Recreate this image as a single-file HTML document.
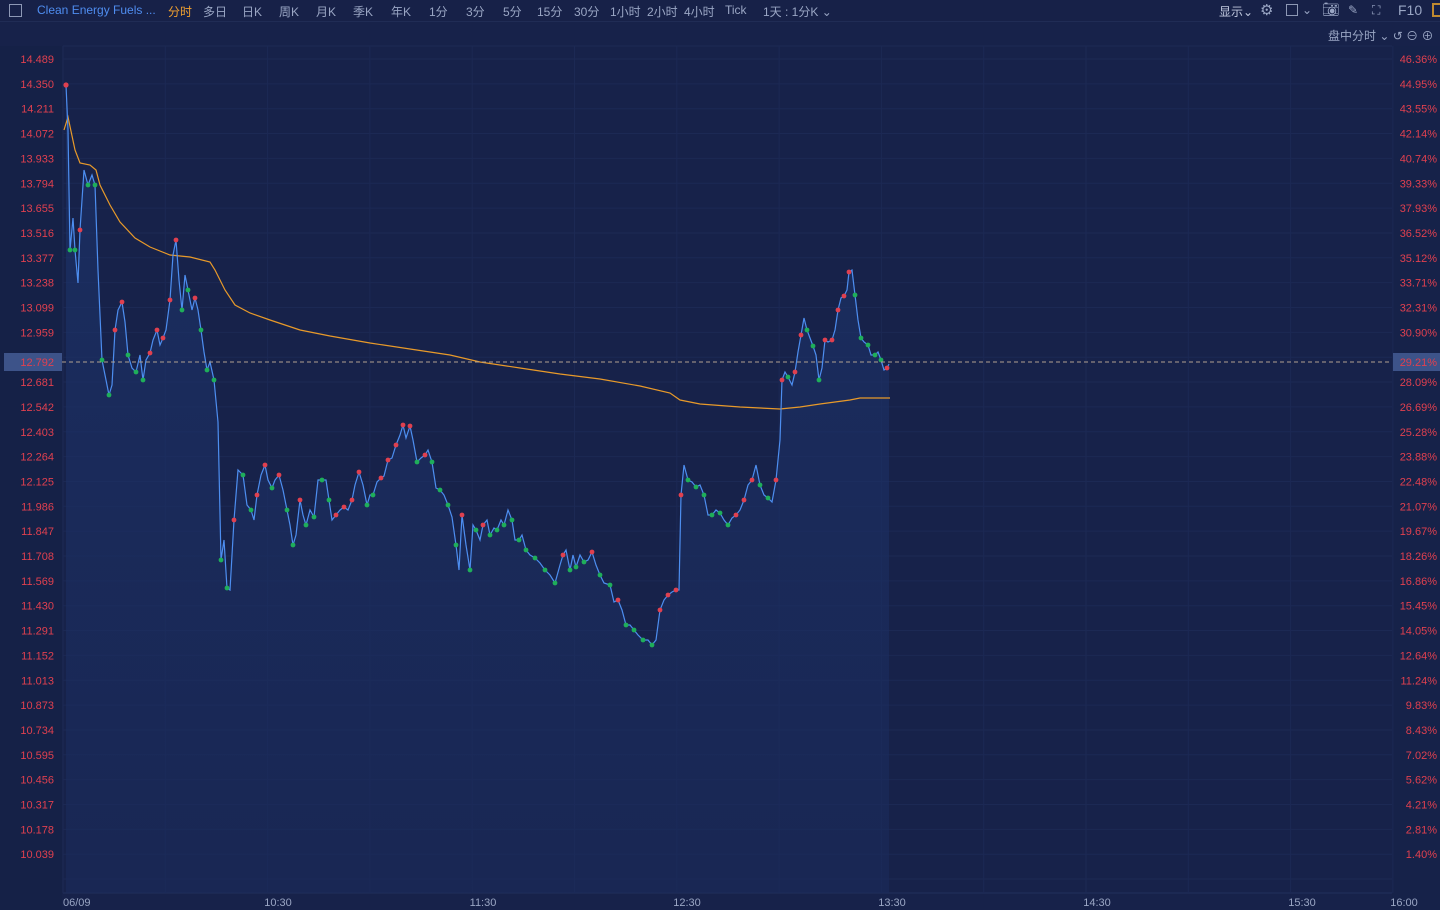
<!DOCTYPE html><html><head><meta charset="utf-8"><style>
*{margin:0;padding:0;box-sizing:border-box}
body{width:1440px;height:910px;background:#17224a;overflow:hidden;font-family:"Liberation Sans","Noto Sans CJK SC",sans-serif;position:relative}
#top{position:absolute;left:0;top:0;width:1440px;height:22px;background:#172148;border-bottom:1px solid #202c55;color:#9aa6c4;font-size:12px}
#top span{position:absolute;top:3px;white-space:nowrap}
svg{position:absolute;left:0;top:0}
</style></head><body>
<div id="top">
<span style="left:9px;top:4px;width:13px;height:13px;border:1px solid #8d98b5"></span>
<span style="left:37px;color:#4f8df0">Clean Energy Fuels ...</span>
<span style="left:168px;color:#f0a030">分时</span>
<span style="left:203px">多日</span><span style="left:242px">日K</span><span style="left:279px">周K</span><span style="left:316px">月K</span><span style="left:353px">季K</span><span style="left:391px">年K</span><span style="left:429px">1分</span><span style="left:466px">3分</span><span style="left:503px">5分</span><span style="left:537px">15分</span><span style="left:574px">30分</span><span style="left:610px">1小时</span><span style="left:647px">2小时</span><span style="left:684px">4小时</span><span style="left:725px">Tick</span><span style="left:763px">1天 : 1分K ⌄</span>
<span style="left:1219px;color:#c0c8de">显示⌄</span>
<span style="left:1260px;font-size:15px;top:1px">⚙</span>
<span style="left:1286px;top:4px;width:12px;height:12px;border:1px solid #8d98b5"></span><span style="left:1302px">⌄</span>
<span style="left:1322px;font-size:14px;top:1px">📷︎</span>
<span style="left:1348px">✎</span><span style="left:1372px">⛶</span>
<span style="left:1398px;font-size:14px;top:2px">F10</span>
<span style="left:1432px;top:3px;width:10px;height:14px;border:2px solid #c08a30"></span>
</div>
<div style="position:absolute;left:1328px;top:27px;color:#9aa6c4;font-size:12px">盘中分时 ⌄ ↺ ⊖ ⊕</div>
<svg id="s" width="1440" height="910"></svg>
<script>
const s=document.getElementById('s');
let h='<rect x="0" y="46" width="62" height="864" fill="#152147"/><rect x="1392" y="46" width="48" height="864" fill="#162249"/>';
h+='<defs><linearGradient id="g" x1="0" y1="0" x2="0" y2="1"><stop offset="0" stop-color="#1d356e"/><stop offset="1" stop-color="#1a2a5a"/></linearGradient></defs>';
for(let i=0;i<34;i++){let y=46+i*24.85+13;h+=`<line x1="63" x2="1392" y1="${y}" y2="${y}" stroke="#1c2954"/>`}
h+=`<line x1="63" x2="1392" y1="46" y2="46" stroke="#1c2954"/><line x1="63" x2="1392" y1="893" y2="893" stroke="#22305c"/>`;
for(let i=0;i<14;i++){let x=63+i*102.3;h+=`<line x1="${x}" x2="${x}" y1="46" y2="893" stroke="#1c2954"/>`}
const L=["14.489","14.350","14.211","14.072","13.933","13.794","13.655","13.516","13.377","13.238","13.099","12.959","","12.681","12.542","12.403","12.264","12.125","11.986","11.847","11.708","11.569","11.430","11.291","11.152","11.013","10.873","10.734","10.595","10.456","10.317","10.178","10.039"];
const R=["46.36","44.95","43.55","42.14","40.74","39.33","37.93","36.52","35.12","33.71","32.31","30.90","","28.09","26.69","25.28","23.88","22.48","21.07","19.67","18.26","16.86","15.45","14.05","12.64","11.24","9.83","8.43","7.02","5.62","4.21","2.81","1.40"];
L.forEach((t,i)=>{if(!t)return;let y=59+i*24.85+4;h+=`<text x="54" y="${y}" fill="#e0404f" font-size="11" text-anchor="end" font-family="Liberation Sans">${t}</text>`;h+=`<text x="1437" y="${y}" fill="#e0404f" font-size="11" text-anchor="end" font-family="Liberation Sans">${R[i]}%</text>`});
const P=[66,85,68,130,70,250,73,218,75,250,78,283,80,230,84,170,88,185,92,175,95,185,98,270,102,360,105,375,109,395,112,385,115,330,118,310,122,302,125,322,128,355,132,368,136,372,140,355,143,380,146,360,150,353,153,340,157,330,160,345,163,338,166,330,170,300,173,255,176,240,179,280,182,310,185,275,188,290,192,310,195,298,198,310,201,330,204,352,207,370,210,362,214,380,218,422,221,560,224,540,227,588,230,590,234,520,238,470,243,475,247,505,251,510,254,520,257,495,261,475,265,465,268,480,272,488,275,480,279,475,283,490,287,510,290,525,293,545,296,535,300,500,303,515,306,525,310,510,314,517,318,480,322,480,326,480,329,500,332,520,336,515,340,510,344,507,348,510,352,500,355,485,359,472,363,485,367,505,370,495,373,495,377,482,381,478,384,476,388,460,392,458,396,445,400,435,403,425,406,438,410,426,413,440,417,462,421,458,425,455,428,450,432,462,436,488,440,490,444,495,448,505,452,517,456,545,459,570,462,515,466,545,470,570,473,525,476,530,480,540,483,525,487,520,490,535,494,528,497,530,501,520,504,525,508,510,512,520,515,540,519,540,522,535,526,550,530,555,535,558,540,563,545,570,550,575,555,583,560,565,563,555,566,550,570,570,573,555,576,567,580,555,584,562,588,560,592,552,596,565,600,575,604,583,610,585,614,602,618,600,622,610,626,625,630,625,634,630,638,635,643,640,648,640,652,645,656,640,660,610,664,600,668,595,672,592,676,590,679,590,681,495,684,465,688,480,692,482,696,487,700,485,704,495,708,515,712,515,716,510,720,513,724,520,728,525,732,518,736,515,740,510,744,500,748,485,752,480,756,465,760,485,764,495,768,498,772,502,776,480,780,440,782,380,785,372,788,377,792,385,795,372,798,352,801,335,804,318,807,330,810,338,813,346,816,355,819,380,822,368,825,340,828,342,832,340,835,330,838,310,841,298,844,296,847,290,849,272,852,270,855,295,858,320,861,338,864,342,868,345,871,355,875,355,878,352,881,360,884,370,887,368,889,364];
let pts=[];for(let i=0;i<P.length;i+=2)pts.push([P[i],P[i+1]]);
let pl=pts.map(p=>p.join(',')).join(' ');
h+=`<polygon points="66,893 ${pl} 889,893" fill="url(#g)" opacity="0.6"/>`;
const V=[64,130,68,117,75,150,80,163,90,165,96,170,100,185,110,205,120,222,135,238,150,247,170,255,190,257,210,262,215,270,225,290,235,305,250,313,270,320,300,330,330,336,370,343,410,349,450,355,480,362,520,368,560,374,600,379,640,386,670,393,680,400,700,404,740,407,780,409,800,407,820,404,850,400,860,398,890,398];
let vp=[];for(let i=0;i<V.length;i+=2)vp.push(V[i]+','+V[i+1]);
h+=`<polyline points="${vp.join(' ')}" fill="none" stroke="#e89a2a" stroke-width="1.2"/>`;
h+=`<polyline points="${pl}" fill="none" stroke="#4d8ef0" stroke-width="1.2"/>`;
for(let i=1;i<pts.length;i++){if(i%2)continue;let up=pts[i][1]<pts[i-1][1];h+=`<circle cx="${pts[i][0]}" cy="${pts[i][1]}" r="2.4" fill="${up?'#e0404f':'#1fae5a'}"/>`}
h+=`<circle cx="66" cy="85" r="2.6" fill="#e0404f"/>`;
h+=`<line x1="62" x2="1392" y1="362" y2="362" stroke="#b0a090" stroke-dasharray="4,3"/>`;
h+=`<rect x="4" y="353" width="58" height="18" fill="#3d5389"/><text x="54" y="366" fill="#e0404f" font-size="11" text-anchor="end">12.792</text>`;
h+=`<rect x="1393" y="353" width="47" height="18" fill="#3d5389"/><text x="1437" y="366" fill="#e0404f" font-size="11" text-anchor="end">29.21%</text>`;
[["06/09",63,"start"],["10:30",278,"middle"],["11:30",483,"middle"],["12:30",687,"middle"],["13:30",892,"middle"],["14:30",1097,"middle"],["15:30",1302,"middle"],["16:00",1404,"middle"]].forEach(t=>{h+=`<text x="${t[1]}" y="906" fill="#9aa6c4" font-size="11" text-anchor="${t[2]}">${t[0]}</text>`});
s.innerHTML=h;
</script>
</body></html>
